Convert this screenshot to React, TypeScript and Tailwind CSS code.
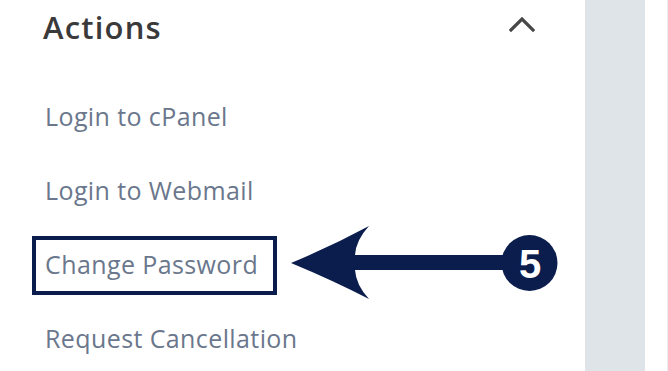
const items = ['Login to cPanel', 'Login to Webmail', 'Change Password', 'Request Cancellation'];

const ActionsPanel = () => {
    return (
        <div className="relative w-[585px] h-full pl-[32px]">
            <div className="flex h-[54px] items-center justify-between pl-[11px] pr-[50px]">
                <h2 className="text-[31px] font-semibold text-[#3a3a3a] leading-none tracking-[1.2px]">Actions</h2>
                <svg width="26" height="16" viewBox="0 0 26 16" className="mt-[-4px]">
                    <path d="M2 13 L13 2 L24 13" fill="none" stroke="#474747" strokeWidth="3.2" strokeLinecap="square" />
                </svg>
            </div>
            <ul className="mt-[26px] flex flex-col">
                {items.map((label, i) => (
                    <li key={label} className="flex h-[74px] items-center">
                        <span
                            className={
                                i === 2
                                    ? 'inline-flex h-[59px] items-center border-4 border-[#0b1d4d] pl-[9px] pr-[15px] text-[25px] tracking-[0.4px] text-[#6a778c]'
                                    : 'inline-flex h-[59px] items-center border-4 border-transparent pl-[9px] pr-[15px] text-[25px] tracking-[0.4px] text-[#6a778c]'
                            }
                        >
                            {label}
                        </span>
                    </li>
                ))}
            </ul>
            {/* annotation arrow + step badge */}
            <svg
                className="absolute left-[285px] top-[222px]"
                width="280"
                height="82"
                viewBox="285 222 280 82"
            >
                <path
                    d="M291 263 Q332 246 369 226 Q356 240 355 255 L505 255 L505 270 L355 270 Q356 285 369 299 Q332 280 291 263 Z"
                    fill="#0b1d4d"
                />
                <circle cx="529.5" cy="263" r="28" fill="#0b1d4d" />
                <text
                    x="530"
                    y="278"
                    textAnchor="middle"
                    fill="#ffffff"
                    fontSize="40"
                    fontWeight="bold"
                    fontFamily="'Liberation Sans', Arial, sans-serif"
                >
                    5
                </text>
            </svg>
        </div>
    );
};

const App = () => {
    return (
        <div className="flex h-[371px] w-[668px] overflow-hidden bg-white" style={{ fontFamily: '"Open Sans", Lato, sans-serif' }}>
            <ActionsPanel />
            <div className="w-[60px] h-full bg-[#dfe4e9]" />
            <div className="flex-1 h-full border-r border-[#eceef1]" />
        </div>
    );
};

export default App;
